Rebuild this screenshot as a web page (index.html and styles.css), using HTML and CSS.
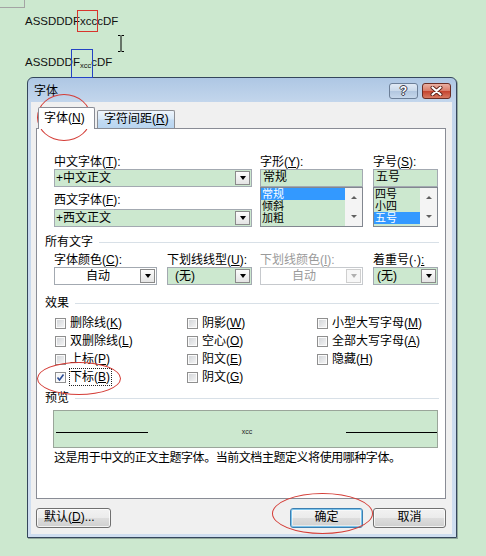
FILE: index.html
```html
<!DOCTYPE html>
<html lang="zh-CN">
<head>
<meta charset="utf-8">
<title>字体</title>
<link rel="stylesheet" href="styles.css">
</head>
<body>
<div class="canvas">
  <div class="corner"></div>
  <p class="docline first">ASSDDDF<span class="mark-red">xcc</span>cDF</p>
  <p class="docline second">ASSDDD<span class="mark-blue">F<sub>xcc</sub></span>cDF</p>

  <div class="dialog">
    <div class="titlebar">
      <span class="title">字体</span>
      <span class="tb-btn help">?</span>
      <span class="tb-btn close"><svg width="13" height="10" viewBox="0 0 13 10"><path d="M2.5 1.5l8 7M10.5 1.5l-8 7" stroke="#5a2118" stroke-width="4" stroke-linecap="round"/><path d="M2.5 1.5l8 7M10.5 1.5l-8 7" stroke="#fff" stroke-width="2.2" stroke-linecap="round"/></svg></span>
    </div>
    <div class="client">
      <div class="tabs">
        <div class="tab active">字体(<u>N</u>)</div>
        <div class="tab">字符间距(<u>R</u>)</div>
      </div>
      <div class="panel">
        <div class="fonts">
          <div class="col w198">
            <div class="lbl">中文字体(<u>T</u>):</div>
            <div class="combo green"><span class="val">+中文正文</span><span class="dd"><i class="tri"></i></span></div>
            <div class="lbl gap6">西文字体(<u>F</u>):</div>
            <div class="combo green gap2"><span class="val">+西文正文</span><span class="dd"><i class="tri"></i></span></div>
          </div>
          <div class="col w103 ml8">
            <div class="lbl">字形(<u>Y</u>):</div>
            <div class="field green">常规</div>
            <div class="list green">
              <div class="items">
                <div class="item sel">常规</div>
                <div class="item">倾斜</div>
                <div class="item">加粗</div>
              </div>
              <div class="sbar"><i class="up"></i><i class="down"></i></div>
            </div>
          </div>
          <div class="col w65 ml10">
            <div class="lbl">字号(<u>S</u>):</div>
            <div class="field green">五号</div>
            <div class="list green">
              <div class="items">
                <div class="item">四号</div>
                <div class="item">小四</div>
                <div class="item sel">五号</div>
              </div>
              <div class="sbar"><i class="up"></i><i class="down"></i></div>
            </div>
          </div>
        </div>

        <div class="group g1"><span>所有文字</span></div>
        <div class="row2">
          <div class="col w103">
            <div class="lbl">字体颜色(<u>C</u>):</div>
            <div class="combo white"><span class="val center">自动</span><span class="dd"><i class="tri"></i></span></div>
          </div>
          <div class="col w85 ml10">
            <div class="lbl">下划线线型(<u>U</u>):</div>
            <div class="combo green"><span class="val pad">(无)</span><span class="dd"><i class="tri"></i></span></div>
          </div>
          <div class="col w103 ml8">
            <div class="lbl disabled">下划线颜色(<u>I</u>):</div>
            <div class="combo white off"><span class="val center">自动</span><span class="dd"><i class="tri"></i></span></div>
          </div>
          <div class="col w65 ml10">
            <div class="lbl">着重号(·)<u>:</u></div>
            <div class="combo green"><span class="val pad2">(无)</span><span class="dd"><i class="tri"></i></span></div>
          </div>
        </div>

        <div class="group g2"><span>效果</span></div>
        <div class="effects">
          <div class="chk"><i class="cb"></i><span>删除线(<u>K</u>)</span></div>
          <div class="chk"><i class="cb"></i><span>双删除线(<u>L</u>)</span></div>
          <div class="chk"><i class="cb"></i><span>上标(<u>P</u>)</span></div>
          <div class="chk"><i class="cb on"><svg width="9" height="9" viewBox="0 0 9 9"><path d="M1.5 4.5l2 2.5 4-5.5" fill="none" stroke="#2b4c95" stroke-width="1.6"/></svg></i><span class="focus">下标(<u>B</u>)</span></div>
          <div class="chk"><i class="cb"></i><span>阴影(<u>W</u>)</span></div>
          <div class="chk"><i class="cb"></i><span>空心(<u>O</u>)</span></div>
          <div class="chk"><i class="cb"></i><span>阳文(<u>E</u>)</span></div>
          <div class="chk"><i class="cb"></i><span>阴文(<u>G</u>)</span></div>
          <div class="chk"><i class="cb"></i><span>小型大写字母(<u>M</u>)</span></div>
          <div class="chk"><i class="cb"></i><span>全部大写字母(<u>A</u>)</span></div>
          <div class="chk"><i class="cb"></i><span>隐藏(<u>H</u>)</span></div>
        </div>

        <div class="group g3"><span>预览</span></div>
        <div class="preview">
          <i class="pline left"></i>
          <span class="ptext">xcc</span>
          <i class="pline right"></i>
        </div>
        <p class="desc">这是用于中文的正文主题字体。当前文档主题定义将使用哪种字体。</p>
      </div>
      <div class="buttons">
        <span class="btn b-default">默认(<u>D</u>)...</span>
        <span class="btn b-ok">确定</span>
        <span class="btn b-cancel">取消</span>
      </div>
    </div>
  </div>

  <svg class="ibeam" width="8" height="17" viewBox="0 0 8 17"><path d="M1 .5h2.5M4.5 .5H7M4 1v15M1 16.5h2.5M4.5 16.5H7" stroke="#000" fill="none"/></svg>
  <div class="ellipse e1"></div>
  <div class="ellipse e2"></div>
  <div class="ellipse e3"></div>
</div>
</body>
</html>
```

FILE: styles.css
```css
* { box-sizing: border-box; }
html, body { margin: 0; padding: 0; }
body {
  background: #cce8cf;
  font-family: "Liberation Sans", "Noto Sans CJK SC", sans-serif;
  font-size: 12px;
  color: #000;
}
.canvas { position: relative; width: 486px; height: 556px; overflow: hidden; }

.corner {
  width: 25px; height: 8px;
  border-right: 1px solid #a4a4a4;
  border-bottom: 1px solid #a4a4a4;
}
.docline {
  margin: 6px 0 0 25px;
  height: 14px;
  font-size: 11.5px;
  line-height: 14px;
  color: #111;
}
.docline.second { margin-top: 27px; }
.docline sub { font-size: 7.5px; line-height: 0; vertical-align: -2px; }
.mark-red {
  outline: 1px solid #d8342c;
  padding: 4px 0 4px 2px;
  margin-left: -2px;
}
.mark-blue {
  outline: 1px solid #2443c4;
  padding: 6px 1px 9px 1px;
  margin: 0 -1px;
}

/* dialog window */
.dialog {
  width: 430px;
  height: 461px;
  margin: 8px 0 0 27px;
  border: 1px solid #34465c;
  border-radius: 6px 6px 0 0;
  background: linear-gradient(#aec7e4 0, #c3d6ec 24px, #cfdef0 100%);
  padding: 0 4px 3px 3px;
  display: flex;
  flex-direction: column;
  box-shadow: 1px 1px 0 rgba(40,50,60,.35);
}
.titlebar {
  height: 24px;
  flex: none;
  display: flex;
  align-items: flex-start;
  padding: 6px 0 0 3px;
}
.title { line-height: 14px; font-size: 12px; }
.tb-btn {
  margin-top: -1px;
  width: 29px; height: 16px;
  border-radius: 3px;
  display: flex; align-items: center; justify-content: center;
}
.help {
  margin-left: auto;
  border: 1px solid #6c7f98;
  background: linear-gradient(#e1eaf5 0, #c9d8ea 50%, #b1c6df 50%, #c6d7eb 100%);
  color: #fff;
  font: bold 12px/14px "Liberation Sans", sans-serif;
  text-shadow: 0 0 1px #223, 1px 0 0 #445, -1px 0 0 #445, 0 1px 0 #445, 0 -1px 0 #445;
}
.close {
  margin-left: 4px;
  margin-right: 1px;
  border: 1px solid #6b2d25;
  background: linear-gradient(#eab0a2 0, #d97b68 50%, #c4412c 50%, #d77a62 100%);
}

.client {
  flex: 1;
  background: #f0f0f0;
  padding: 5px 6px 0 5px;
  display: flex;
  flex-direction: column;
}
.tabs {
  height: 22px;
  margin-bottom: -1px;
  padding-left: 2px;
  display: flex;
  align-items: flex-start;
  position: relative;
  z-index: 1;
}
.tab {
  white-space: nowrap;
  line-height: 14px;
}
.tab.active {
  width: 57px;
  height: 22px;
  border: 1px solid #898c95;
  border-bottom: none;
  border-radius: 2px 2px 0 0;
  background: #fff;
  padding: 3px 0 0 5px;
}
.tab:not(.active) {
  width: 78px;
  height: 18px;
  margin: 3px 0 0 2px;
  border: 1px solid #8c8e94;
  border-bottom: none;
  border-radius: 2px 2px 0 0;
  background: linear-gradient(#eef5fc 0, #d9e9f8 45%, #c2dbf3 55%, #b9d5f0 100%);
  padding: 1px 0 0 6px;
}

.panel {
  height: 371px;
  flex: none;
  border: 1px solid #898c95;
  background: #fff;
  padding: 26px 6px 0 17px;
}

.fonts { display: flex; height: 72px; }
.row2 { display: flex; margin-top: 4px; }
.col { display: flex; flex-direction: column; }
.w198 { width: 198px; }
.w103 { width: 103px; }
.w85 { width: 85px; }
.w65 { width: 65px; }
.ml8 { margin-left: 8px; }
.ml10 { margin-left: 10px; }
.gap6 { margin-top: 6px; }
.gap2 { margin-top: 2px; }

.lbl { height: 14px; line-height: 14px; white-space: nowrap; }
.lbl.disabled { color: #9a9a9a; }

.green { background: #cce8cf; }
.white { background: #fff; }

.combo {
  height: 18px;
  border: 1px solid #a3a9b1;
  display: flex;
  align-items: center;
}
.combo .val { flex: 1; line-height: 14px; padding-left: 1px; white-space: nowrap; }
.combo .val.center { text-align: center; }
.combo .val.pad { padding-left: 7px; }
.combo .val.pad2 { padding-left: 3px; }
.dd {
  width: 15px; height: 14px;
  margin-right: 1px;
  border: 1px solid #8a8a8a;
  background: linear-gradient(#fcfcfc, #e4e4e4);
  display: flex; align-items: center; justify-content: center;
}
.tri {
  width: 0; height: 0;
  border-left: 3.5px solid transparent;
  border-right: 3.5px solid transparent;
  border-top: 4px solid #000;
}
.combo.off { border-color: #c6c9cd; color: #9a9a9a; }
.combo.off .dd { border-color: #cfcfcf; background: #f7f7f7; }
.combo.off .tri { border-top-color: #b0b0b0; }

.field {
  height: 18px;
  border: 1px solid #a3a9b1;
  line-height: 15px;
  padding-left: 2px;
}
.list {
  height: 40px;
  border: 1px solid #828790;
  display: flex;
}
.items { flex: 1; }
.item {
  height: 12px;
  line-height: 12px;
  font-size: 11px;
  padding-left: 1px;
  white-space: nowrap;
  overflow: hidden;
}
.item.sel { background: #3399ff; color: #fff; }
.sbar {
  width: 17px;
  background: #f4f4f4;
  display: flex;
  flex-direction: column;
  justify-content: space-around;
  align-items: center;
}
.sbar .up, .sbar .down {
  width: 0; height: 0;
  border-left: 3px solid transparent;
  border-right: 3px solid transparent;
}
.sbar .up { border-bottom: 3px solid #606060; }
.sbar .down { border-top: 3px solid #606060; }

.group {
  display: flex;
  align-items: center;
  height: 14px;
  line-height: 14px;
  margin-left: -9px;
  white-space: nowrap;
}
.group::after {
  content: "";
  flex: 1;
  height: 1px;
  background: #d8e0e7;
  margin-left: 6px;
}
.g1 { margin-top: 8px; }
.g2 { margin-top: 11px; }
.g3 { margin-top: 5px; }

.effects {
  margin-top: 4px;
  display: grid;
  grid-template-columns: 132px 130px 1fr;
  grid-template-rows: repeat(4, 18px);
  grid-auto-flow: column;
}
.chk { display: flex; align-items: center; white-space: nowrap; line-height: 14px; }
.cb {
  width: 11px; height: 11px;
  margin: 0 4px 0 1px;
  border: 1px solid #8f8f8f;
  background: linear-gradient(135deg, #cfd2d6, #f7f7f7);
  box-shadow: inset 0 0 0 1px #fbfbfb;
  display: flex; align-items: center; justify-content: center;
}
.cb.on { background: #f4f6f9; }
.focus { outline: 1px dotted #222; padding: 1px 1px 1px 0; }

.preview {
  margin: 5px 0 0 -1px;
  width: 385px;
  height: 38px;
  border: 1px solid #9aa59a;
  background: #cce8cf;
  display: flex;
  align-items: flex-start;
  padding-left: 2px;
}
.pline { height: 1px; background: #000; margin-top: 21px; }
.pline.left { width: 92px; }
.pline.right { width: 91px; }
.ptext {
  flex: 1;
  text-align: center;
  font-size: 7px;
  line-height: 8px;
  margin-top: 17px;
  color: #222;
}
.desc {
  margin: 3px 0 0;
  line-height: 14px;
  letter-spacing: -0.45px;
  white-space: nowrap;
}

.buttons {
  margin-top: 9px;
  display: flex;
}
.btn {
  height: 20px;
  width: 73px;
  border: 1px solid #707070;
  border-radius: 3px;
  background: linear-gradient(#f2f2f2 0, #ebebeb 50%, #dddddd 50%, #cfcfcf 100%);
  box-shadow: inset 0 0 0 1px rgba(255,255,255,.75);
  line-height: 17px;
  text-align: center;
  white-space: nowrap;
}
.b-default { width: 75px; text-align: left; padding-left: 7px; margin-right: auto; }
.b-ok {
  border-color: #3c7fb1;
  box-shadow: inset 0 0 0 1px #7cc4ec, inset 0 0 0 2px rgba(255,255,255,.5);
}
.b-cancel { margin-left: 10px; }

/* overlays */
.ibeam { position: absolute; left: 117px; top: 35px; }
.ellipse {
  position: absolute;
  border: 1px solid #d43c36;
  border-radius: 50%;
}
.e1 { left: 37px; top: 94px; width: 54px; height: 47px; }
.e2 { left: 37px; top: 362px; width: 84px; height: 33px; }
.e3 { left: 272px; top: 493px; width: 101px; height: 41px; }
```
